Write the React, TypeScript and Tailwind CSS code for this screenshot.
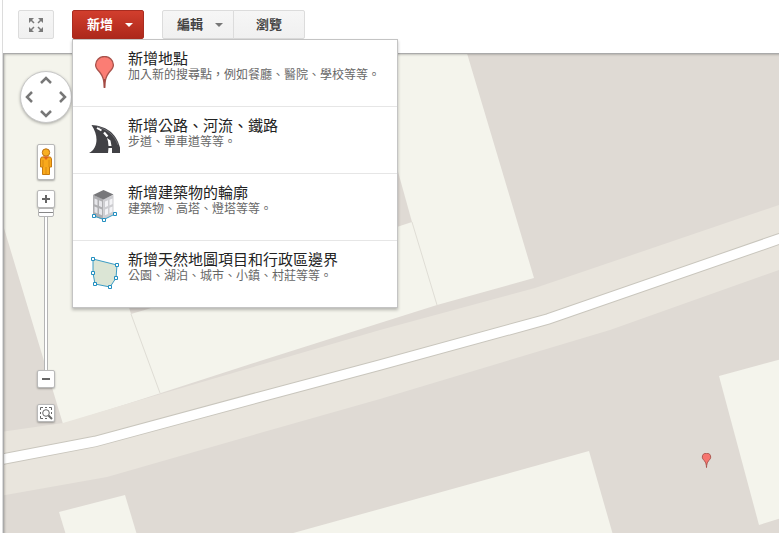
import { ReactNode, useState } from 'react';

interface MenuEntry {
  title: string;
  detail: string;
  icon: ReactNode;
}

const PIN_PATH =
  'M16.500 31C16.300 25 15.200 20.500 12 16.500C9.400 13.500 7.600 12 7.600 8.900A8.900 8.400 0 0 1 25.400 8.900C25.400 12 23.600 13.500 21 16.500C17.800 20.500 16.700 25 16.500 31Z';

function PlaceIcon() {
  return (
    <svg viewBox="0 0 32 32" className="h-8 w-8" aria-hidden="true">
      <path d={PIN_PATH} fill="#fb7d74" stroke="#a8524b" strokeWidth="1.300" />
      <path d="M16.500 23V32" stroke="#a34a43" strokeWidth="1.800" />
    </svg>
  );
}

function RoadIcon() {
  return (
    <svg viewBox="0 0 32 32" className="h-8 w-8" aria-hidden="true">
      <path d="M3.500 2C18 3 30.500 10 33 30H1C10 25 11 13 3.500 2Z" fill="#414145" />
      <path d="M9 4.800L13.500 7.500" stroke="#fff" strokeWidth="2" />
      <path d="M16 9.500L19.500 13.500" stroke="#fff" strokeWidth="2.200" />
      <path d="M19 15L22.500 17.500L23.500 23H20.500L20 18.500Z" fill="#fff" />
      <path d="M20.500 25H24V30H20Z" fill="#fff" />
      <path d="M9 3.800C19 6 26.500 12 30 22" stroke="#77777b" strokeWidth="0.800" fill="none" />
    </svg>
  );
}

function BuildingIcon() {
  return (
    <svg viewBox="0 0 32 32" className="h-8 w-8" aria-hidden="true">
      <path d="M5 5L15.500 9V30L5 26Z" fill="#aeaeb1" />
      <path d="M15.500 9L25.500 5V24.500L15.500 30Z" fill="#cdcdd1" />
      <path d="M5 5L15.500 0L25.500 4.500L15.500 9.500Z" fill="#77777a" />
      <path
        d="M6.500 8.500L9.500 9.700V15.500L6.500 14.300ZM11 10.300L14 11.500V17.300L11 16.100ZM6.500 16.500L9.500 17.700V23.500L6.500 22.300ZM11 18.300L14 19.500V25.300L11 24.100Z"
        fill="#e6e6ea"
      />
      <path
        d="M17 11.500L20 10.300V16L17 17.300ZM21.500 9.700L24.500 8.500V14L21.500 15.400ZM17 19.500L20 18.300V24L17 25.300ZM21.500 17.700L24.500 16.400V21.700L21.500 23.300Z"
        fill="#f3f3f6"
      />
      <path d="M6 26L16 29.500L27 24" stroke="#3c9cc4" fill="none" />
      <g fill="#fff" stroke="#238fc0">
        <path d="M4.500 24.500H7.500V27.500H4.500Z" />
        <path d="M14.500 28.500H17.500V31.500H14.500Z" />
        <path d="M25.500 22.500H28.500V25.500H25.500Z" />
      </g>
    </svg>
  );
}

function AreaIcon() {
  return (
    <svg viewBox="0 0 32 32" className="h-8 w-8" aria-hidden="true">
      <path d="M5 2L29 8L28 21L22 30L7 27L5 16Z" fill="#dbe5d5" stroke="#3c9cc4" />
      <g fill="#fff" stroke="#238fc0">
        <path d="M3.500 0.500H6.500V3.500H3.500Z" />
        <path d="M27.500 6.500H30.500V9.500H27.500Z" />
        <path d="M26.500 19.500H29.500V22.500H26.500Z" />
        <path d="M20.500 28.500H23.500V31.500H20.500Z" />
        <path d="M5.500 25.500H8.500V28.500H5.500Z" />
        <path d="M3.500 14.500H6.500V17.500H3.500Z" />
      </g>
    </svg>
  );
}

const ENTRIES: MenuEntry[] = [
  { title: '新增地點', detail: '加入新的搜尋點，例如餐廳、醫院、學校等等。', icon: <PlaceIcon /> },
  { title: '新增公路、河流、鐵路', detail: '步道、單車道等等。', icon: <RoadIcon /> },
  { title: '新增建築物的輪廓', detail: '建築物、高塔、燈塔等等。', icon: <BuildingIcon /> },
  { title: '新增天然地圖項目和行政區邊界', detail: '公園、湖泊、城市、小鎮、村莊等等。', icon: <AreaIcon /> },
];

function Caret() {
  return (
    <svg viewBox="0 0 8 4" className="h-1 w-2" aria-hidden="true">
      <path d="M0 0H8L4 4Z" fill="currentColor" />
    </svg>
  );
}

function AddMenu() {
  return (
    <ul
      role="menu"
      className="absolute top-full left-0 z-20 w-[326px] border border-[#c4c4c4] bg-white shadow-[0_2px_3px_rgba(0,0,0,0.25)]"
    >
      {ENTRIES.map(({ title, detail, icon }) => (
        <li key={title} role="none" className="border-b border-[#e6e6e6] last:border-b-0">
          <button type="button" role="menuitem" className="flex h-[66px] w-full items-start gap-2 pl-[15px] text-left">
            <span className="w-8 shrink-0 pt-4">{icon}</span>
            <span className="pt-[11px]">
              <span className="block text-[15px] leading-4 text-[#222]">{title}</span>
              <span className="block text-[12px] leading-4 text-[#666]">{detail}</span>
            </span>
          </button>
        </li>
      ))}
    </ul>
  );
}

function Toolbar() {
  const [open, setOpen] = useState(true);
  const plain =
    'flex h-[29px] items-center justify-center border border-[#dcdcdc] bg-linear-to-b from-[#f6f6f6] to-[#f0f0f0] text-[13px] font-bold text-[#444]';

  return (
    <header className="relative z-10 flex h-[53px] gap-[18px] pt-[10px] pl-[18px]">
      <button type="button" aria-label="全螢幕" className={`${plain} w-9 rounded-xs`}>
        <svg viewBox="0 0 16 16" className="h-4 w-4" fill="none" stroke="#7a7a7a" aria-hidden="true">
          <path d="M2 2L6 6M14 2L10 6M2 14L6 10M14 14L10 10" strokeWidth="1.500" />
          <path d="M1 1H6L1 6ZM15 1H10L15 6ZM1 15H6L1 10ZM15 15H10L15 10Z" fill="#7a7a7a" stroke="none" />
        </svg>
      </button>

      <div className="relative h-[29px]">
        <button
          type="button"
          aria-haspopup="menu"
          aria-expanded={open}
          onClick={() => setOpen(!open)}
          className="flex h-[29px] w-[72px] items-center justify-center gap-3 rounded-xs border border-[#a92c20] bg-linear-to-b from-[#d23e2d] to-[#ad281b] pl-1 text-[13px] font-bold text-white"
        >
          新增
          <Caret />
        </button>
        {open && <AddMenu />}
      </div>

      <div className="flex">
        <button type="button" aria-haspopup="menu" className={`${plain} w-[72px] gap-3 rounded-l-xs pl-1`}>
          編輯
          <span className="text-[#777]">
            <Caret />
          </span>
        </button>
        <button type="button" className={`${plain} w-[72px] -ml-px rounded-r-xs`}>
          瀏覽
        </button>
      </div>
    </header>
  );
}

function MapCanvas() {
  const road = 'M-10 461.500L3 459L95 441.500L260 397L380 365L548 319L779 239L800 232';

  return (
    <svg
      viewBox="4 54 775 479"
      preserveAspectRatio="xMinYMin slice"
      className="absolute inset-0 h-full w-full"
      aria-hidden="true"
    >
      <rect x="0" y="50" width="800" height="500" fill="#dfdad4" />
      <g fill="#f4f4ec">
        <path d="M0 50H466L534 278L437 305L380 323L260 361L130 403L63 424L3 225H0Z" />
        <path d="M59 512L125 495L137 535H66Z" />
        <path d="M286 535L380 509L589 451L613 535Z" />
        <path d="M719 376L785 358V517L759 525Z" />
      </g>
      {/* block between the parcels */}
      <path d="M131 314L148 309L412 222L397 168L110 245Z" fill="#dfdad4" />
      <path d="M131 314L160 393M412 222L437 305" stroke="#dfddd5" fill="none" />
      {/* sidewalk band, then the road on top */}
      <path
        d="M0 432L63 423L130 403L260 365L380 330L535 288L779 205V270L610 330L380 399L260 433L107 477L0 496Z"
        fill="#e9e5dd"
      />
      <path d={road} stroke="#c9c6bd" strokeWidth="11.500" fill="none" />
      <path d={road} stroke="#fff" strokeWidth="9.500" fill="none" />
      <svg x="701" y="453" width="11" height="15" viewBox="6 0 21 32">
        <path d={PIN_PATH} fill="#f6756f" stroke="#a8524b" strokeWidth="2" />
      </svg>
    </svg>
  );
}

function MapControls() {
  const [zoom, setZoom] = useState(20);
  const box =
    'flex w-[18px] items-center justify-center rounded-xs border border-[#b9b9b9] bg-white shadow-[0_1px_2px_rgba(0,0,0,0.3)]';
  const arrow = 'flex items-center justify-center';

  return (
    <div className="absolute top-[17px] left-4 flex flex-col items-center">
      <div className="grid h-[52px] w-[52px] grid-cols-3 grid-rows-3 rounded-full border border-[#c8c8c8] bg-white shadow-[0_1px_3px_rgba(0,0,0,0.3)]">
        <button type="button" aria-label="向上" className={`${arrow} col-start-2 row-start-1`}>
          <svg viewBox="0 0 12 8" className="h-2 w-3" fill="none" stroke="#777" strokeWidth="2.500">
            <path d="M1 7L6 2L11 7" />
          </svg>
        </button>
        <button type="button" aria-label="向左" className={`${arrow} col-start-1 row-start-2`}>
          <svg viewBox="0 0 8 12" className="h-3 w-2" fill="none" stroke="#777" strokeWidth="2.500">
            <path d="M7 1L2 6L7 11" />
          </svg>
        </button>
        <button type="button" aria-label="向右" className={`${arrow} col-start-3 row-start-2`}>
          <svg viewBox="0 0 8 12" className="h-3 w-2" fill="none" stroke="#777" strokeWidth="2.500">
            <path d="M1 1L6 6L1 11" />
          </svg>
        </button>
        <button type="button" aria-label="向下" className={`${arrow} col-start-2 row-start-3`}>
          <svg viewBox="0 0 12 8" className="h-2 w-3" fill="none" stroke="#777" strokeWidth="2.500">
            <path d="M1 1L6 6L11 1" />
          </svg>
        </button>
      </div>

      <button type="button" aria-label="街景服務" className={`${box} mt-[21px] h-9`}>
        <svg viewBox="0 0 14 28" className="h-7 w-[14px] shrink-0">
          <path
            d="M2.500 9H11.500L12.500 11V19H10.500V26.500H3.500V19H1.500V11Z"
            fill="#f9a91b"
            stroke="#c67a10"
          />
          <path d="M4 12V19M10 12V19M7 19V26" stroke="#d98a12" />
          <circle cx="7" cy="4.500" r="3.700" fill="#f9b021" stroke="#b96f12" />
          <path d="M4 8.500L7 12L10 8.500Z" fill="#e0651c" />
        </svg>
      </button>

      <button type="button" aria-label="放大" className={`${box} mt-[10px] h-[18px]`}>
        <svg viewBox="0 0 8 8" className="h-2 w-2" stroke="#666" strokeWidth="2">
          <path d="M0 4H8M4 0V8" />
        </svg>
      </button>
      <div className="relative flex h-[162px] w-4 justify-center">
        <div className="w-1 border-x border-[#b5b5b5] bg-white" />
        <input
          type="range"
          aria-label="縮放"
          min={0}
          max={20}
          value={zoom}
          onChange={(e) => setZoom(Number(e.target.value))}
          className="absolute inset-0 h-full w-full appearance-none bg-transparent [direction:rtl] [writing-mode:vertical-lr] [&::-webkit-slider-thumb]:h-[9px] [&::-webkit-slider-thumb]:w-4 [&::-webkit-slider-thumb]:appearance-none [&::-webkit-slider-thumb]:rounded-xs [&::-webkit-slider-thumb]:border [&::-webkit-slider-thumb]:border-[#b5b5b5] [&::-webkit-slider-thumb]:bg-[linear-gradient(#fff_3px,#888_3px,#888_4px,#fff_4px)]"
        />
      </div>
      <button type="button" aria-label="縮小" className={`${box} h-[18px]`}>
        <svg viewBox="0 0 8 8" className="h-2 w-2" stroke="#666" strokeWidth="2">
          <path d="M0 4H8" />
        </svg>
      </button>

      <button type="button" aria-label="縮放至選取範圍" className={`${box} mt-4 h-[18px]`}>
        <svg viewBox="0 0 14 14" className="h-[14px] w-[14px] shrink-0" fill="none" stroke="#666">
          <path d="M1.500 4V1.500H4M6 1.500H8M10 1.500H12.500V4M1.500 6V8M1.500 10V12.500H4M6 12.500H8M12.500 6V8" />
          <circle cx="7" cy="7" r="3.300" />
          <path d="M9.500 9.500L13 13" strokeWidth="2" />
        </svg>
      </button>
    </div>
  );
}

export default function App() {
  return (
    <div className="flex min-h-screen bg-white font-['Liberation_Sans','Noto_Sans_CJK_TC',sans-serif]">
      <div className="w-[3px] shrink-0 border-r border-[#dcdcdc]" />
      <div className="-ml-[3px] flex flex-1 flex-col">
        <Toolbar />
        <main className="relative ml-[3px] flex-1 overflow-hidden border-t border-l border-[#aaa]">
          <MapCanvas />
          <div className="pointer-events-none absolute inset-0 shadow-[inset_3px_3px_3px_-3px_rgba(0,0,0,0.4)]" />
          <MapControls />
        </main>
      </div>
    </div>
  );
}
